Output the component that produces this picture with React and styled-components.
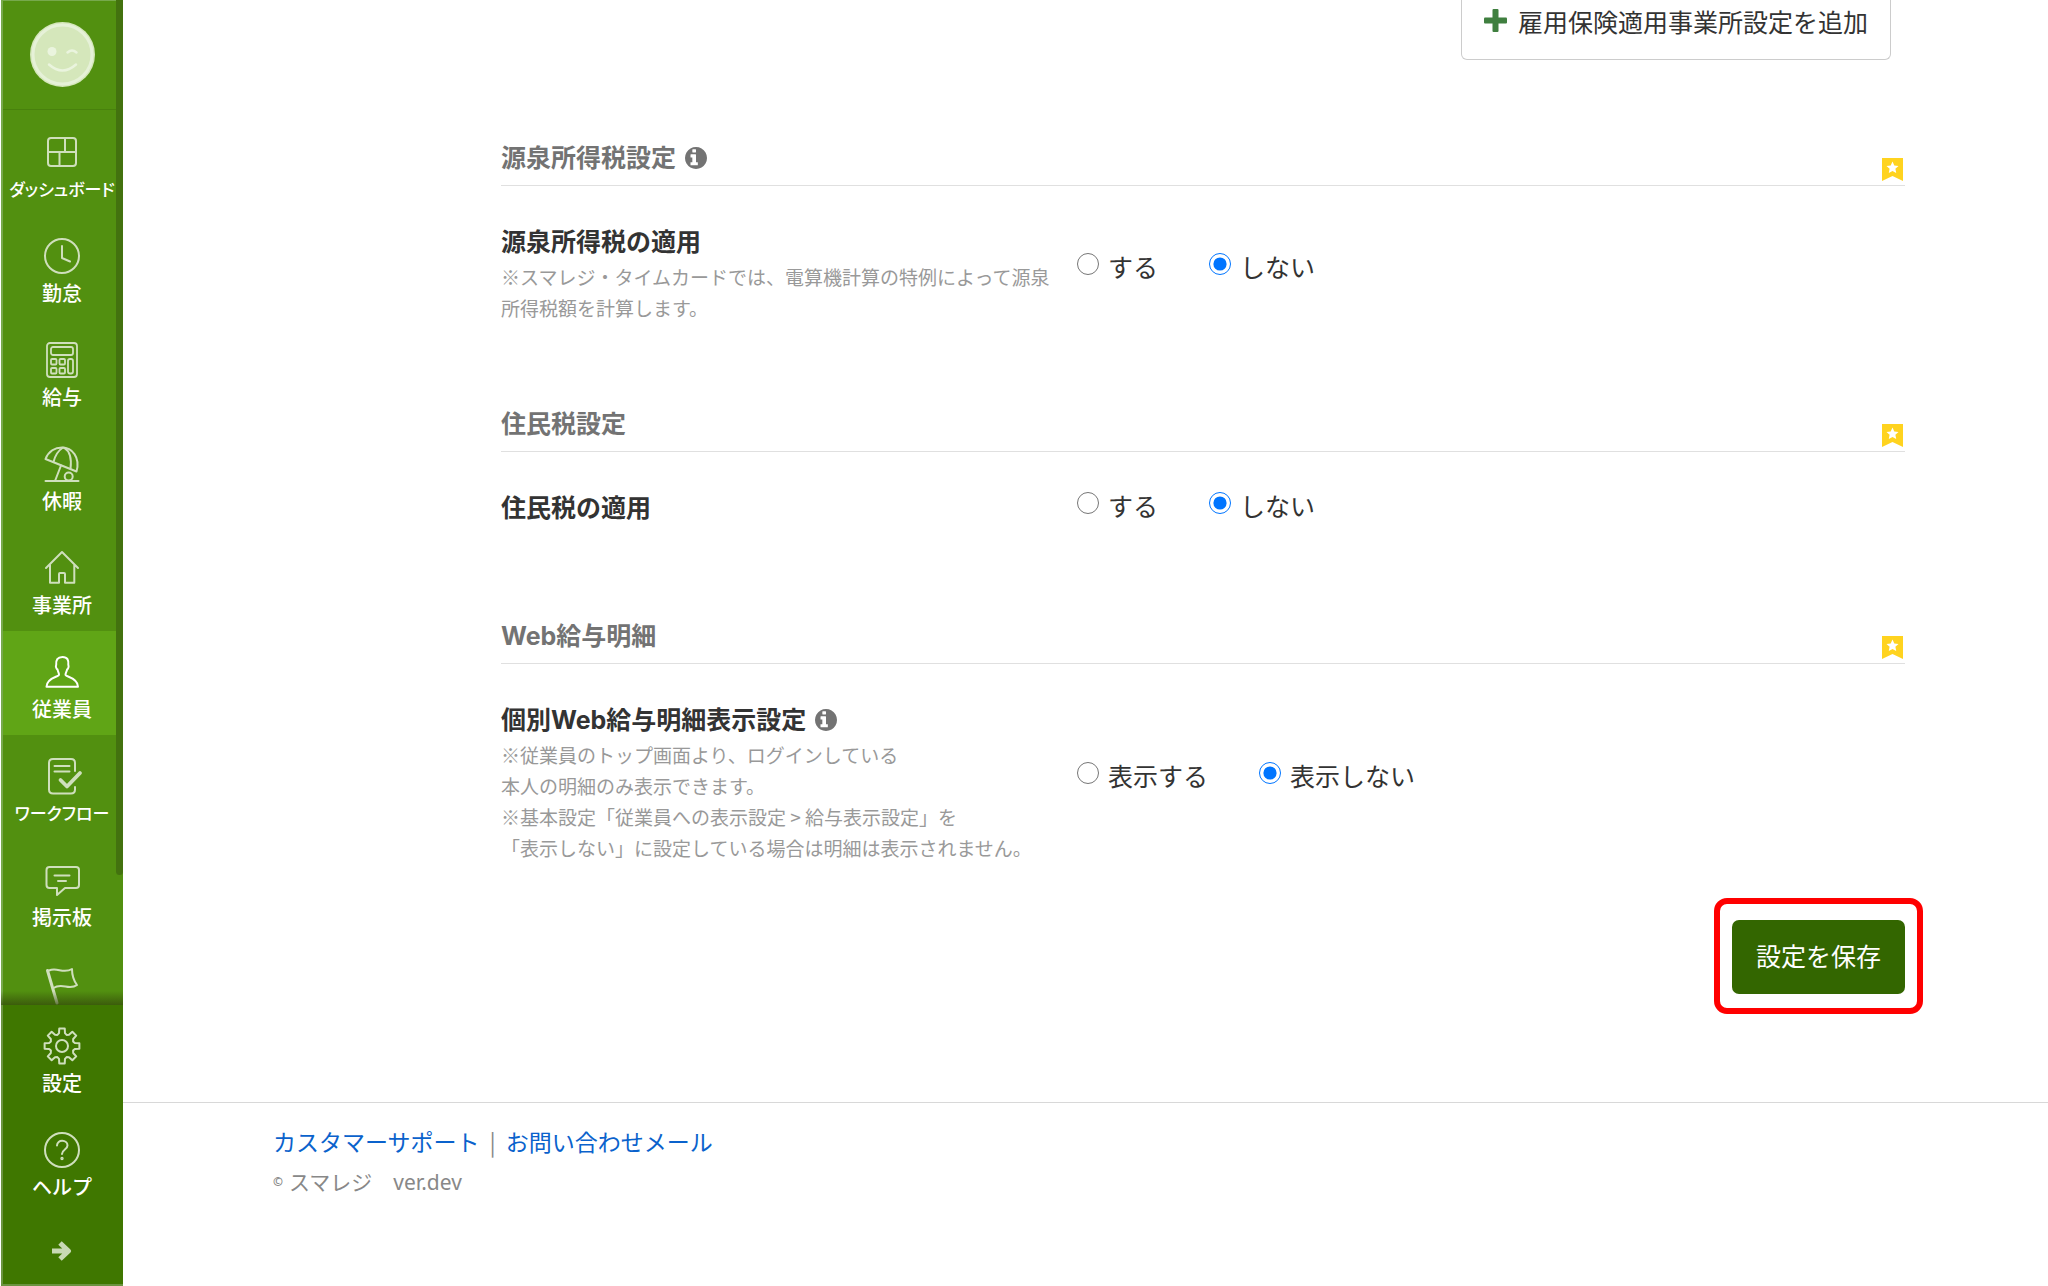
import React from "react";
import styled, { createGlobalStyle } from "styled-components";

const GlobalStyle = createGlobalStyle`
  *, *::before, *::after { box-sizing: border-box; }
  body {
    margin: 0;
    background: #fff;
    color: #333;
    font-family: "Noto Sans CJK JP", sans-serif;
    font-size: 25px;
    line-height: 36px;
  }
  a { color: inherit; text-decoration: none; }
  svg { display: block; }
`;

const Shell = styled.div`
  display: flex;
  align-items: flex-start;
  min-height: 100vh;
`;

/* ---------- sidebar ---------- */

const Sidebar = styled.aside`
  position: sticky;
  top: 0;
  flex: none;
  display: flex;
  flex-direction: column;
  width: 122px;
  height: 100vh;
  margin-left: 1px;
  overflow: hidden;
  color: #fff;
  background: #529010;
  box-shadow: inset 2px 1px 0 #77a94c;
`;

const Profile = styled.a`
  flex: none;
  display: flex;
  justify-content: center;
  height: 110px;
  padding-top: 22px;
  border-bottom: 1px solid #48810d;
  margin: 0 2px;
`;

const MenuArea = styled.nav`
  position: relative;
  flex: 1;
  min-height: 0;
  overflow: hidden;
  &::after {
    content: "";
    position: absolute;
    inset: auto 0 0 0;
    height: 14px;
    background: linear-gradient(rgba(50, 70, 10, 0), rgba(50, 70, 10, 0.7));
  }
`;

const MenuList = styled.ul`
  list-style: none;
  margin: 0;
  padding: 1px 2px 0;
`;

const ScrollThumb = styled.span`
  position: absolute;
  top: 0;
  right: 0;
  width: 7px;
  height: 875px;
  border-radius: 0 0 4px 4px;
  background: #43720f;
`;

const MenuLink = styled.a`
  display: flex;
  flex-direction: column;
  align-items: center;
  gap: 5px;
  height: 104px;
  padding-top: 23px;
  background: ${(p) => (p.$active ? "#60a516" : "transparent")};
  svg {
    width: 36px;
    height: 36px;
    overflow: visible;
    color: ${(p) => (p.$active ? "#fff" : "#cfdfbc")};
  }
`;

const MenuLabel = styled.span`
  font-size: ${(p) => (p.$long ? 17 : 20)}px;
  font-weight: 500;
  line-height: 28px;
  white-space: nowrap;
  font-feature-settings: ${(p) => (p.$long ? '"palt"' : "normal")};
`;

const BottomMenu = styled.nav`
  flex: none;
  height: 281px;
  padding: 0 2px;
  background: #3f7700;
  border-bottom: 2px solid #6b9440;
  box-shadow: inset 2px 0 0 #6b9440;
`;

const ExpandButton = styled.button`
  display: flex;
  align-items: center;
  justify-content: center;
  width: 100%;
  height: 71px;
  padding: 5px 0 0;
  border: 0;
  background: none;
  color: #c8d9b4;
`;

/* ---------- content ---------- */

const Page = styled.div`
  flex: 1;
  min-width: 0;
`;

const Content = styled.main`
  padding: 0 143px 108px 378px;
`;

const AddRow = styled.div`
  display: flex;
  justify-content: flex-end;
  padding-right: 14px;
  margin-bottom: 80px;
`;

const AddButton = styled.button`
  display: flex;
  align-items: center;
  gap: 11px;
  height: 60px;
  padding: 0 22px 18px;
  border: 1px solid #ccc;
  border-top: 0;
  border-radius: 0 0 6px 6px;
  background: #fff;
  color: #333;
  font: inherit;
`;

const Section = styled.section`
  & + & { margin-top: 82px; }
`;

const SectionHead = styled.header`
  display: flex;
  align-items: flex-end;
  justify-content: space-between;
  padding: 0 2px 4px 0;
  border-bottom: 1px solid #e0e0e0;
`;

const SectionTitle = styled.h2`
  display: flex;
  align-items: center;
  gap: 9px;
  margin: 0;
  padding-bottom: 5px;
  color: #737373;
  font: 700 25px/36px Inter, "Noto Sans CJK JP", sans-serif;
`;

const Row = styled.div`
  display: grid;
  grid-template-columns: 576px 1fr;
  align-items: center;
  padding-top: 38px;
`;

const RowText = styled.div`
  align-self: start;
`;

const RowTitle = styled.h3`
  display: flex;
  align-items: center;
  gap: 9px;
  margin: 0;
  font: 700 25px/36px Inter, "Noto Sans CJK JP", sans-serif;
`;

const Note = styled.p`
  margin: 1px 0;
  padding-right: 16px;
  color: #999;
  font-size: 19px;
  line-height: 31px;
`;

const Options = styled.div`
  display: flex;
  gap: 51px;
  padding-bottom: 16px;
`;

const Option = styled.label`
  display: flex;
  align-items: center;
  gap: 9px;
  line-height: 30px;
  white-space: nowrap;
`;

const Radio = styled.input`
  width: 22px;
  height: 22px;
  margin: 0 0 4px;
  accent-color: #0075ff;
`;

const Actions = styled.div`
  display: flex;
  justify-content: flex-end;
  margin-top: 56px;
`;

const SaveWrap = styled.div`
  position: relative;
  &::after {
    content: "";
    position: absolute;
    inset: -22px -18px -20px;
    border: 6px solid #f00;
    border-radius: 13px;
    pointer-events: none;
  }
`;

const SaveButton = styled.button`
  display: block;
  height: 74px;
  padding: 0 24px 4px;
  border: 0;
  border-radius: 7px;
  background: #360;
  color: #fff;
  font: inherit;
`;

const Footer = styled.footer`
  padding: 20px 150px 0;
  border-top: 1px solid #d8d8d8;
  color: #888;
`;

const FooterLinks = styled.div`
  display: flex;
  gap: 10px;
  font-size: 23px;
  a { color: #0a62cc; }
`;

const Copyright = styled.p`
  display: flex;
  align-items: center;
  gap: 6px;
  margin: 5px 0 0;
  font: 21px/36px "Noto Sans", "Noto Sans CJK JP", sans-serif;
  small { font-size: 12px; font-weight: 700; }
`;

/* ---------- drawings ---------- */

const Line = ({ children, width = 2 }) => (
  <svg viewBox="0 0 36 36" fill="none" stroke="currentColor" strokeWidth={width}
    strokeLinejoin="round" strokeLinecap="round" aria-hidden="true">
    {children}
  </svg>
);

const gearPath = () => {
  const pts = [];
  for (let i = 0; i < 8; i++) {
    [[-13, 13.2], [-9, 17.6], [9, 17.6], [13, 13.2], [22.5, 12]].forEach(([d, r]) => {
      const a = ((i * 45 + d - 90) * Math.PI) / 180;
      pts.push(`${(18 + r * Math.cos(a)).toFixed(2)} ${(18 + r * Math.sin(a)).toFixed(2)}`);
    });
  }
  return `M${pts.join("L")}Z`;
};

const icons = {
  dashboard: (
    <Line>
      <rect x="4" y="4" width="28" height="28" rx="3" />
      <path d="M4 18h28M21 4v14M15.500 18v14" />
    </Line>
  ),
  clock: (
    <Line>
      <circle cx="18" cy="18" r="17" />
      <path d="M18 8v12l8 3.500" />
    </Line>
  ),
  calc: (
    <Line width={1.8}>
      <rect x="3" y="1" width="30" height="34" rx="3" />
      <rect x="7" y="5" width="22" height="8" rx="2" />
      <rect x="7" y="17" width="5.500" height="5.500" rx="1" />
      <rect x="15.500" y="17" width="5.500" height="5.500" rx="1" />
      <rect x="7" y="26" width="5.500" height="5.500" rx="1" />
      <rect x="15.500" y="26" width="5.500" height="5.500" rx="1" />
      <rect x="24" y="17" width="5" height="14.500" rx="2" />
    </Line>
  ),
  umbrella: (
    <Line>
      <path d="M1.500 13C4.500 5.500 11 1.500 18 1.500c10 0 18.500 9.500 14.500 24z" />
      <path d="M19 1.500Q12 6 9.500 16M20 1.700q8.500 5 6.500 21M17 19.500l-6 15.500" />
      <circle cx="24.700" cy="30.500" r="4" />
      <path d="M1.500 35h33" />
    </Line>
  ),
  house: (
    <Line>
      <path d="M2 18 18 2l16 16M6 15v17.700h9V24q0-1 1-1h4q1 0 1 1v8.700h9.300V15" />
    </Line>
  ),
  person: (
    <Line>
      <path d="M18.500 3c-5 0-6.800 3-6.300 8-.9 1.200.2 4 1.300 4.500.4 2 1.500 3.300 1.500 5.200 0 2.300-12.300 2.500-12.500 12h31.500c-.2-9.500-12.500-9.700-12.500-12 0-1.900 1.200-3.200 1.600-5.200 1.100-.5 2-3.300 1.200-4.500.5-5-.8-8-5.800-8z" />
    </Line>
  ),
  workflow: (
    <Line>
      <path d="M31 13V5q0-4-4-4H9Q5 1 5 5v26.500q0 4 4 4h18q4 0 4-4V29M10.500 8h15M10.500 13.500h15" />
      <path d="M16.500 22l6.500 6.500L36 15" strokeWidth="3.800" />
    </Line>
  ),
  board: (
    <Line>
      <path d="M5 5h27q3 0 3 3v15q0 3-3 3H21l-8 7v-7H5.500q-3 0-3-3V8q0-3 3-3zM10.500 13.500h15M14 19h8" />
    </Line>
  ),
  flag: (
    <Line>
      <path d="M3.500 4.500 13 37" strokeWidth="3" />
      <path d="M5 4.500c8-4 14 4 23-1.500 0 7 2 12 5 16-8 6-15-3-23.500 3" />
    </Line>
  ),
  gear: (
    <Line>
      <path d={gearPath()} />
      <circle cx="18" cy="18" r="6" />
    </Line>
  ),
  help: (
    <Line>
      <circle cx="18" cy="18" r="17" />
      <path d="M13 13.500c0-6.500 10.500-6 10.500 0 0 4-5.500 4-5.500 8.500" />
      <circle cx="18" cy="26.500" r="0.700" />
    </Line>
  ),
};

const Info = () => (
  <svg width="22" height="22" viewBox="128 128 1536 1536" fill="#737373" aria-hidden="true">
    <path d="M1024 1376v-160q0-14-9-23t-23-9h-96v-512q0-14-9-23t-23-9h-320q-14 0-23 9t-9 23v160q0 14 9 23t23 9h96v320h-96q-14 0-23 9t-9 23v160q0 14 9 23t23 9h448q14 0 23-9t9-23zM896 480v-160q0-14-9-23t-23-9h-192q-14 0-23 9t-9 23v160q0 14 9 23t23 9h192q14 0 23-9t9-23zM1664 896q0 209-103 385.500t-279.500 279.500-385.500 103-385.500-103-279.500-279.500-103-385.500 103-385.500 279.500-279.500 385.500-103 385.500 103 279.500 279.500 103 385.500z" />
  </svg>
);

const Face = () => (
  <svg width="65" height="65" viewBox="0 0 65 65" aria-hidden="true">
    <circle cx="32.500" cy="32.500" r="32.500" fill="#d5e7bb" />
    <circle cx="32.500" cy="32.500" r="29.500" fill="none" stroke="#e6f1d8" strokeWidth="3" />
    <circle cx="22" cy="29.500" r="4.500" fill="#eaf4de" />
    <path d="M37.500 30.500q4.500-4 9 0M19 42.500q13.500 12 27 0" fill="none"
      stroke="#eaf4de" strokeWidth="2.500" strokeLinecap="round" />
  </svg>
);

const Plus = () => (
  <svg width="23" height="23" viewBox="0 0 23 23" fill="#3f7f3f" aria-hidden="true">
    <rect x="8.500" width="6" height="23" rx="1" />
    <rect y="8.500" width="23" height="6" rx="1" />
  </svg>
);

const Arrow = () => (
  <svg width="20" height="20" viewBox="0 0 20 20" fill="none" stroke="currentColor"
    strokeWidth="5" strokeLinejoin="round" aria-hidden="true">
    <path d="M0 10h16M8 2l8.500 8L8 18" />
  </svg>
);

const StarBadge = () => (
  <svg width="21" height="23" viewBox="0 0 21 23" aria-hidden="true">
    <path d="M0 0h21v23l-10.500-5L0 23z" fill="#ffd31f" />
    <path d="m10.500 3.500 1.800 3.900 4.200.5-3.100 2.900.8 4.200-3.700-2.100L6.800 15l.8-4.200-3.100-2.900 4.200-.5z" fill="#fff" />
  </svg>
);

/* ---------- data ---------- */

const menu = [
  { icon: "dashboard", label: "ダッシュボード", long: true },
  { icon: "clock", label: "勤怠" },
  { icon: "calc", label: "給与" },
  { icon: "umbrella", label: "休暇" },
  { icon: "house", label: "事業所" },
  { icon: "person", label: "従業員", active: true },
  { icon: "workflow", label: "ワークフロー", long: true },
  { icon: "board", label: "掲示板" },
  { icon: "flag" },
];

const bottomMenu = [
  { icon: "gear", label: "設定" },
  { icon: "help", label: "ヘルプ" },
];

const sections = [
  {
    id: "income-tax",
    title: "源泉所得税設定",
    titleInfo: true,
    rowTitle: "源泉所得税の適用",
    notes: ["※スマレジ・タイムカードでは、電算機計算の特例によって源泉所得税額を計算します。"],
    options: ["する", "しない"],
  },
  {
    id: "resident-tax",
    title: "住民税設定",
    rowTitle: "住民税の適用",
    options: ["する", "しない"],
  },
  {
    id: "web-payslip",
    title: "Web給与明細",
    rowTitle: "個別Web給与明細表示設定",
    rowInfo: true,
    notes: [
      "※従業員のトップ画面より、ログインしている",
      "本人の明細のみ表示できます。",
      "※基本設定「従業員への表示設定 > 給与表示設定」を",
      "「表示しない」に設定している場合は明細は表示されません。",
    ],
    options: ["表示する", "表示しない"],
  },
];

const MenuItem = ({ icon, label, active, long }) => (
  <MenuLink href="#" $active={active}>
    {icons[icon]}
    {label && <MenuLabel $long={long}>{label}</MenuLabel>}
  </MenuLink>
);

const SettingSection = ({ id, title, titleInfo, rowTitle, rowInfo, notes, options }) => (
  <Section>
    <SectionHead>
      <SectionTitle>{title}{titleInfo && <Info />}</SectionTitle>
      <StarBadge />
    </SectionHead>
    <Row>
      <RowText>
        <RowTitle id={`${id}-title`}>{rowTitle}{rowInfo && <Info />}</RowTitle>
        {notes && (
          <Note>
            {notes.map((line, i) => (
              <React.Fragment key={line}>{i > 0 && <br />}{line}</React.Fragment>
            ))}
          </Note>
        )}
      </RowText>
      <Options role="radiogroup" aria-labelledby={`${id}-title`}>
        {options.map((text, i) => (
          <Option key={text}>
            <Radio type="radio" name={id} defaultChecked={i === 1} />
            {text}
          </Option>
        ))}
      </Options>
    </Row>
  </Section>
);

export default function App() {
  return (
    <Shell>
      <GlobalStyle />
      <Sidebar>
        <Profile href="#"><Face /></Profile>
        <MenuArea>
          <MenuList>
            {menu.map((m) => <li key={m.icon}><MenuItem {...m} /></li>)}
          </MenuList>
        </MenuArea>
        <BottomMenu>
          {bottomMenu.map((m) => <MenuItem key={m.icon} {...m} />)}
          <ExpandButton type="button"><Arrow /></ExpandButton>
        </BottomMenu>
        <ScrollThumb />
      </Sidebar>
      <Page>
        <Content>
          <AddRow>
            <AddButton type="button"><Plus />雇用保険適用事業所設定を追加</AddButton>
          </AddRow>
          {sections.map((s) => <SettingSection key={s.id} {...s} />)}
          <Actions>
            <SaveWrap><SaveButton type="button">設定を保存</SaveButton></SaveWrap>
          </Actions>
        </Content>
        <Footer>
          <FooterLinks>
            <a href="#">カスタマーサポート</a>
            <span>|</span>
            <a href="#">お問い合わせメール</a>
          </FooterLinks>
          <Copyright><small>©</small>スマレジ　ver.dev</Copyright>
        </Footer>
      </Page>
    </Shell>
  );
}
